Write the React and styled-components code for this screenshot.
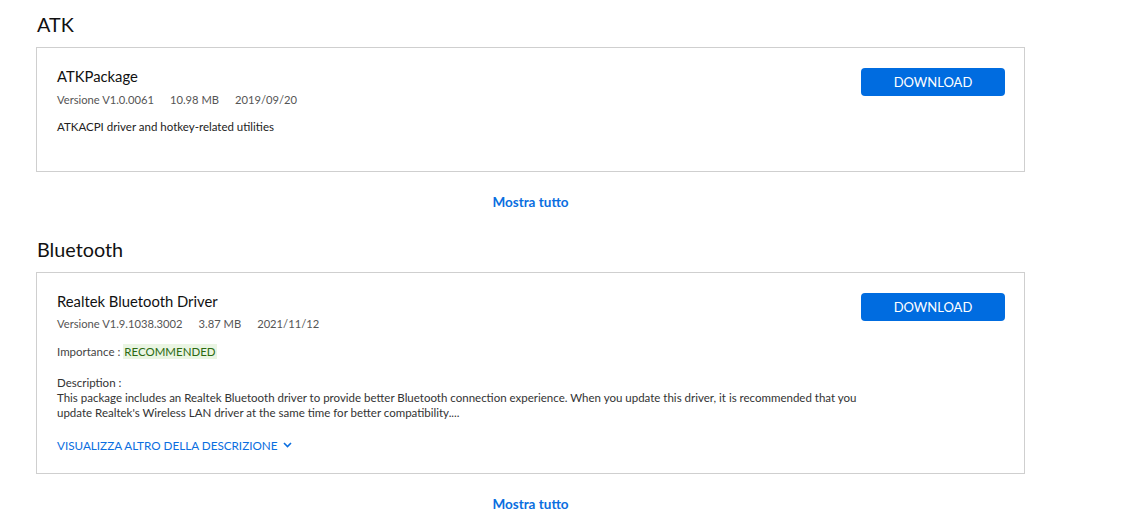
import React from "react";
import styled, { createGlobalStyle } from "styled-components";

const GlobalStyle = createGlobalStyle`
  body {
    margin: 0;
    background: #fff;
    font-family: "Lato", "Liberation Sans", sans-serif;
    color: #181818;
  }
`;

const sections = [
  {
    name: "ATK",
    drivers: [
      {
        title: "ATKPackage",
        version: "Versione V1.0.0061",
        size: "10.98 MB",
        date: "2019/09/20",
        summary: "ATKACPI driver and hotkey-related utilities"
      }
    ]
  },
  {
    name: "Bluetooth",
    drivers: [
      {
        title: "Realtek Bluetooth Driver",
        version: "Versione V1.9.1038.3002",
        size: "3.87 MB",
        date: "2021/11/12",
        importance: "RECOMMENDED",
        description:
          "This package includes an Realtek Bluetooth driver to provide better Bluetooth connection experience. When you update this driver, it is recommended that you update Realtek's Wireless LAN driver at the same time for better compatibility...."
      }
    ]
  }
];

const Chevron = () => (
  <svg width="9" height="6" viewBox="0 0 9 6" fill="none">
    <path d="M1 1l3.5 3.5L8 1" stroke="#0a6ee0" strokeWidth="1.6" />
  </svg>
);

const DriverCard = ({ driver }) => (
  <Card>
    <CardBody>
      <Title>{driver.title}</Title>
      <Meta $tight={!!driver.importance}>
        <span>{driver.version}</span>
        <span>{driver.size}</span>
        <span>{driver.date}</span>
      </Meta>
      {driver.summary && <Summary>{driver.summary}</Summary>}
      {driver.importance && (
        <Importance>
          Importance : <Badge>{driver.importance}</Badge>
        </Importance>
      )}
      {driver.description && (
        <>
          <Description>
            Description :
            <br />
            {driver.description}
          </Description>
          <MoreLink>
            VISUALIZZA ALTRO DELLA DESCRIZIONE <Chevron />
          </MoreLink>
        </>
      )}
    </CardBody>
    <DownloadButton>DOWNLOAD</DownloadButton>
  </Card>
);

const App = () => (
  <Page>
    <GlobalStyle />
    {sections.map((section, i) => (
      <Section key={section.name} $first={i === 0}>
        <Heading>{section.name}</Heading>
        {section.drivers.map((d) => (
          <DriverCard key={d.title} driver={d} />
        ))}
        <ShowAll>Mostra tutto</ShowAll>
      </Section>
    ))}
  </Page>
);

const Page = styled.div({
  padding: "12px 0 0 36px",
  width: "989px"
});

const Section = styled.section`
  margin-top: ${(p) => (p.$first ? "0" : "27px")};
`;

const Heading = styled.h2({
  margin: "0 0 11px 1px",
  fontSize: "19.8px",
  lineHeight: "24px",
  fontWeight: 400,
  color: "#111"
});

const Card = styled.div({
  border: "1px solid #cfcfcf",
  minHeight: "125px",
  boxSizing: "border-box",
  padding: "19px 19px 20px 20px",
  display: "flex",
  justifyContent: "space-between",
  alignItems: "flex-start"
});

const CardBody = styled.div({
  flex: 1,
  maxWidth: "818px"
});

const Title = styled.div({
  fontSize: "14.8px",
  lineHeight: "18px",
  color: "#111"
});

const Meta = styled.div`
  margin-top: ${(p) => (p.$tight ? "6px" : "7px")};
  font-size: 11.2px;
  line-height: 16px;
  color: #555;
  display: flex;
  gap: 16px;
`;

const Summary = styled.div({
  marginTop: "11px",
  fontSize: "11.5px",
  lineHeight: "16px",
  color: "#222"
});

const Importance = styled.div({
  marginTop: "12px",
  fontSize: "11.5px",
  lineHeight: "16px",
  color: "#444"
});

const Badge = styled.span({
  background: "#eaf5e3",
  color: "#2b6a10",
  padding: "1px 1px"
});

const Description = styled.div({
  marginTop: "15px",
  fontSize: "11.5px",
  lineHeight: "15px",
  color: "#333"
});

const MoreLink = styled.div({
  marginTop: "17px",
  fontSize: "11.7px",
  lineHeight: "16px",
  color: "#0a6ee0",
  display: "flex",
  alignItems: "center",
  gap: "6px"
});

const DownloadButton = styled.button({
  width: "144px",
  height: "28px",
  border: "none",
  borderRadius: "4px",
  background: "#006ce0",
  color: "#fff",
  fontFamily: "inherit",
  fontSize: "13px",
  cursor: "pointer",
  flexShrink: 0,
  marginTop: "1px"
});

const ShowAll = styled.div({
  marginTop: "22px",
  textAlign: "center",
  fontSize: "13.5px",
  lineHeight: "16px",
  fontWeight: 700,
  color: "#0a6ee0"
});

export default App;
